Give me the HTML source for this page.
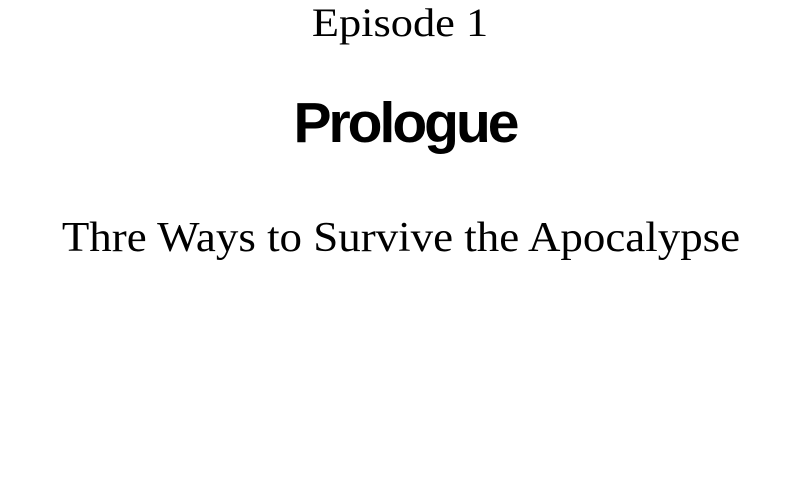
<!DOCTYPE html>
<html><head><style>
body{margin:0;width:800px;height:480px;background:#fff;overflow:hidden;position:relative}
div{position:absolute;left:0;width:800px;text-align:center;color:#000;white-space:nowrap}
.a{top:0px;font-family:"Liberation Serif",serif;font-size:40px;line-height:46px;left:0px;transform:scaleX(1.11)}
.b{top:90px;font-family:"Liberation Sans",sans-serif;font-weight:bold;font-size:57px;line-height:66px;letter-spacing:-3px;left:5px}
.c{top:212px;font-family:"Liberation Serif",serif;font-size:42px;line-height:52px;left:1px;transform:scaleX(1.07)}
</style></head><body>
<div class="a">Episode 1</div>
<div class="b">Prologue</div>
<div class="c">Thre Ways to Survive the Apocalypse</div>
</body></html>
